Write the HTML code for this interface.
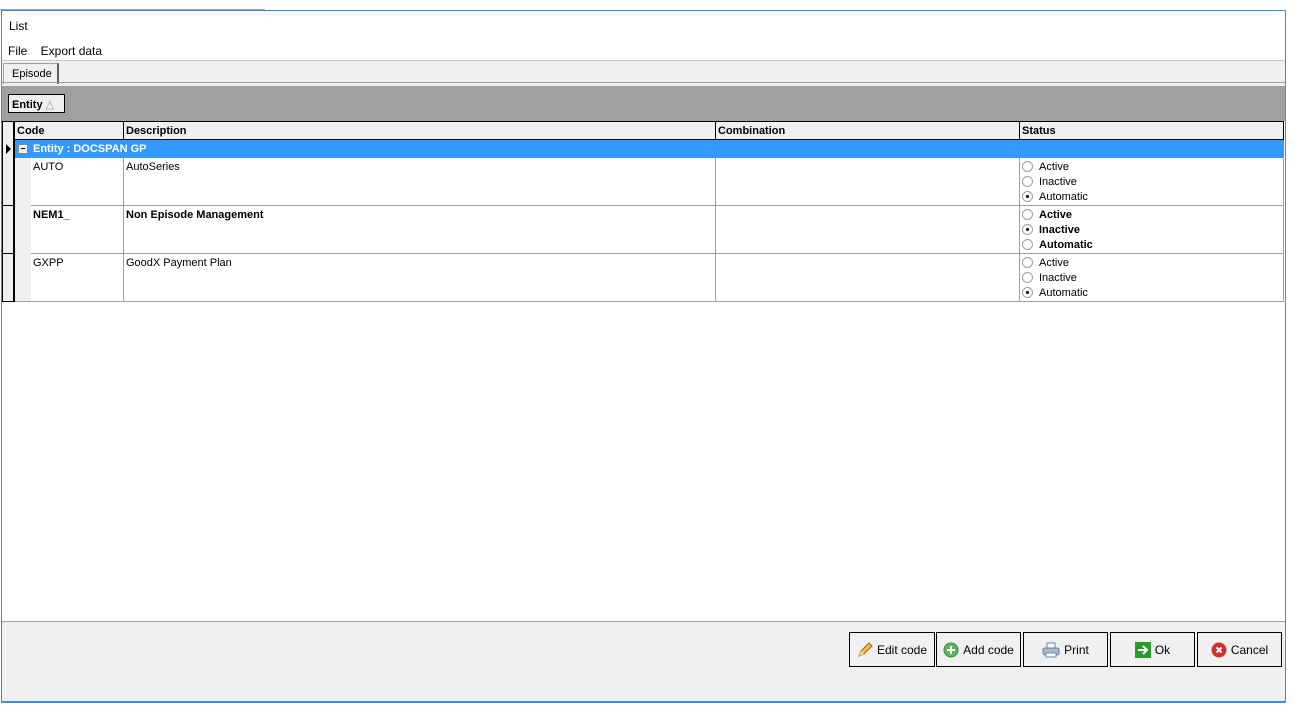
<!DOCTYPE html>
<html><head><style>
*{margin:0;padding:0;box-sizing:border-box}
body{width:1295px;height:705px;background:#fff;font-family:"Liberation Sans",sans-serif;font-size:12px;color:#000;position:relative;overflow:hidden}
.a{position:absolute}
.win{left:1px;top:10px;width:1285px;height:693px;border:1px solid #3c8ce0;border-bottom:2px solid #3c8ce0;background:#fff}
.cell{position:absolute;border-right:1px solid #a0a0a0;border-bottom:1px solid #a0a0a0;padding:3px 2px;font-size:11px}
.hd{position:absolute;top:121px;height:19px;border:1px solid #000;border-left:none;background:#f0f0f0;font-weight:bold;font-size:11px;padding:3px 2px 0}
.rd{display:flex;align-items:center;height:15px;font-size:11px}
.rd i{width:11px;height:11px;border:1px solid #a0a0a0;border-radius:50%;margin:0 6px 0 2px;position:relative;background:#fff}
.rd i.on:after{content:"";position:absolute;left:3px;top:3px;width:3px;height:3px;background:#000;border-radius:50%}
.btn{position:absolute;top:632px;height:35px;border:1px solid #000;background:#f0f0f0;display:flex;align-items:center;justify-content:center;font-size:12px;gap:4px}
</style></head><body>
<div class="a" style="left:0;top:9px;width:265px;height:1px;background:#a0a0a0"></div>
<div class="a win"></div>
<div class="a" style="left:9px;top:19px;font-size:12px">List</div>
<div class="a" style="left:8px;top:44px;font-size:12px">File&nbsp;&nbsp;&nbsp;&nbsp;Export data</div>
<div class="a" style="left:2px;top:60px;width:1283px;height:26px;background:#f0f0f0;border-top:1px solid #c8c8c8"></div>
<div class="a" style="left:3px;top:63px;width:56px;height:21px;background:#f0f0f0;border:1px solid #a0a0a0;border-bottom:none;border-right:2px solid #606060;padding:4px 0 0 8px;font-size:11px">Episode</div>
<div class="a" style="left:2px;top:82px;width:1283px;height:1px;background:#a0a0a0"></div>
<div class="a" style="left:2px;top:86px;width:1283px;height:35px;background:#a0a0a0"></div>
<div class="a" style="left:8px;top:94px;width:57px;height:19px;border:1px solid #000;background:#f0f0f0;font-weight:bold;font-size:11px;padding:3px 3px 0">Entity <span style="font-weight:normal;color:#999">△</span></div>
<div class="a" style="left:2px;top:121px;width:13px;height:181px;background:#f0f0f0;border:1px solid #000;border-right:2px solid #000"></div>
<div class="hd" style="left:15px;width:109px">Code</div>
<div class="hd" style="left:124px;width:592px">Description</div>
<div class="hd" style="left:716px;width:304px">Combination</div>
<div class="hd" style="left:1020px;width:264px">Status</div>
<div class="a" style="left:6px;top:144px;width:0;height:0;border-left:5px solid #000;border-top:5px solid transparent;border-bottom:5px solid transparent"></div>
<div class="a" style="left:15px;top:140px;width:1269px;height:18px;background:#3399ff;color:#fff;font-weight:bold;font-size:11px;padding:3px 0 0 18px;border-bottom:1px dotted #c08040">Entity : DOCSPAN GP</div>
<div class="a" style="left:18px;top:144px;width:10px;height:10px;background:#f0f0f0;border:1px solid #888"><div style="position:absolute;left:2px;top:3px;width:4px;height:1px;background:#000"></div></div>
<div class="a" style="left:15px;top:158px;width:16px;height:144px;background:#f0f0f0;border-bottom:1px solid #a0a0a0"></div>
<div class="a" style="left:3px;top:205px;width:11px;height:1px;background:#000"></div>
<div class="a" style="left:3px;top:253px;width:11px;height:1px;background:#000"></div>

<div class="cell" style="left:31px;top:158px;width:93px;height:48px">AUTO</div>
<div class="cell" style="left:124px;top:158px;width:592px;height:48px">AutoSeries</div>
<div class="cell" style="left:716px;top:158px;width:304px;height:48px"></div>
<div class="cell" style="left:1020px;top:158px;width:264px;height:48px;padding:1px 0"><div class="rd"><i></i>Active</div><div class="rd"><i></i>Inactive</div><div class="rd"><i class="on"></i>Automatic</div></div>

<div class="cell" style="left:31px;top:206px;width:93px;height:48px;font-weight:bold">NEM1_</div>
<div class="cell" style="left:124px;top:206px;width:592px;height:48px;font-weight:bold">Non Episode Management</div>
<div class="cell" style="left:716px;top:206px;width:304px;height:48px"></div>
<div class="cell" style="left:1020px;top:206px;width:264px;height:48px;padding:1px 0;font-weight:bold"><div class="rd"><i></i>Active</div><div class="rd"><i class="on"></i>Inactive</div><div class="rd"><i></i>Automatic</div></div>

<div class="cell" style="left:31px;top:254px;width:93px;height:48px">GXPP</div>
<div class="cell" style="left:124px;top:254px;width:592px;height:48px">GoodX Payment Plan</div>
<div class="cell" style="left:716px;top:254px;width:304px;height:48px"></div>
<div class="cell" style="left:1020px;top:254px;width:264px;height:48px;padding:1px 0"><div class="rd"><i></i>Active</div><div class="rd"><i></i>Inactive</div><div class="rd"><i class="on"></i>Automatic</div></div>

<div class="a" style="left:2px;top:621px;width:1283px;height:80px;background:#f0f0f0;border-top:1px solid #a0a0a0"></div>
<div class="btn" style="left:849px;width:86px"><svg width="16" height="16"><path d="M2 14 L4 9 L12 1 L15 4 L7 12 Z" fill="#f0c040" stroke="#a06010"/><path d="M2 14 L4 9 L7 12Z" fill="#f5d9a0"/></svg>Edit code</div>
<div class="btn" style="left:936px;width:85px"><svg width="16" height="16"><circle cx="8" cy="8" r="7" fill="#5cb85c" stroke="#3a8a3a"/><path d="M8 4v8M4 8h8" stroke="#fff" stroke-width="2"/></svg>Add code</div>
<div class="btn" style="left:1023px;width:85px"><svg width="18" height="16"><rect x="5" y="1" width="8" height="6" fill="#fff" stroke="#6a8ab0"/><rect x="1" y="6" width="16" height="7" rx="2" fill="#a8b8d0" stroke="#6a7a90"/><rect x="4" y="11" width="10" height="4" fill="#fff" stroke="#6a8ab0"/></svg>Print</div>
<div class="btn" style="left:1110px;width:85px"><svg width="16" height="16"><rect x="0" y="0" width="16" height="16" fill="#2a9a2a"/><path d="M3 8h8M8 4l4 4-4 4" stroke="#fff" stroke-width="2" fill="none"/></svg>Ok</div>
<div class="btn" style="left:1197px;width:85px"><svg width="16" height="16"><circle cx="8" cy="8" r="7.5" fill="#d03030"/><path d="M5.5 5.5l5 5M10.5 5.5l-5 5" stroke="#fff" stroke-width="2"/></svg>Cancel</div>
</body></html>
